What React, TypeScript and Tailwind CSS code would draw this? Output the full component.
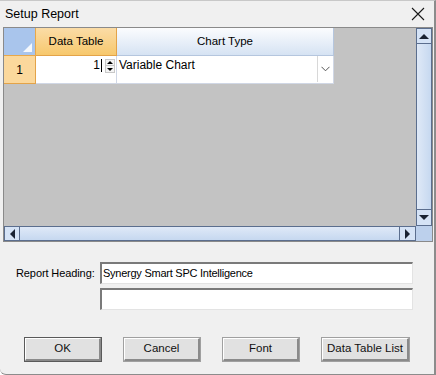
import React from "react";

const font = { fontFamily: '"Liberation Sans", Arial, sans-serif' };

function Btn({ label, w, def }: { label: string; w: string; def?: boolean }) {
  return (
    <div
      className={`${w} h-[25px] ${def ? "border border-[#5a5a5a]" : "border border-[#a0a0a0]"} bg-[#e1e1e1]`}
    >
      <div className="w-full h-full border-t border-l border-t-white border-l-white border-b-2 border-r-2 border-b-[#8a8a8a] border-r-[#8a8a8a] flex items-center justify-center text-[11.5px] text-[#111]">
        {label}
      </div>
    </div>
  );
}

export default function App() {
  return (
    <div
      className="w-[436px] h-[375px] bg-[#f0f0f0] overflow-hidden flex flex-col border-r-2 border-b border-r-[#8c8c8c] border-b-[#8c8c8c] border-t border-t-[#c8c8c8] rounded-bl-[6px]"
      style={font}
    >
      {/* Title bar */}
      <div className="h-[26px] flex items-center justify-between pl-[5px] pr-[8px] shrink-0">
        <span className="text-[12.5px] text-black leading-none">Setup Report</span>
        <svg width="14" height="14" viewBox="0 0 14 14" className="mr-[1px]">
          <path d="M1 1 L13 13 M13 1 L1 13" stroke="#1a1a1a" strokeWidth="1.1" fill="none" />
        </svg>
      </div>

      {/* Grid */}
      <div className="ml-[3px] w-[430px] h-[215px] border border-[#8a8a8a] bg-[#c3c3c3] flex flex-col shrink-0">
        <div className="flex flex-1 min-h-0">
          <div className="flex-1 flex flex-col">
            {/* header row */}
            <div className="flex h-[28px]">
              <div className="w-[32px] h-full bg-[#a9c5ec] border-r border-b border-[#e8a84a] relative">
                <div className="absolute right-[3px] bottom-[3px] w-0 h-0 border-l-[9px] border-l-transparent border-b-[9px] border-b-[#f4f8fd]" />
              </div>
              <div className="w-[81px] h-full bg-gradient-to-b from-[#fbdca6] to-[#f7c86c] border-r border-b border-[#e3a349] flex items-center justify-center text-[11.5px] text-black">
                Data Table
              </div>
              <div className="w-[217px] h-full bg-gradient-to-b from-[#fbfcfe] to-[#d6e3f3] border-r border-b border-[#b5c6de] flex items-center justify-center text-[11.5px] text-black">
                Chart Type
              </div>
            </div>
            {/* row 1 */}
            <div className="flex h-[28px]">
              <div className="w-[32px] h-full bg-[#fbd89c] border-r border-b border-[#e3a349] flex items-center justify-center text-[12px] text-black pt-[1px]">
                1
              </div>
              <div className="w-[81px] h-full bg-white border-r border-b border-[#d0d7e5] flex items-start justify-end pt-[2px] pr-[1px]">
                <span className="text-[12px] text-black leading-[14px]">1</span>
                <div className="w-[1px] h-[13px] bg-black ml-[1px] mt-[1px]" />
                <div className="ml-[3px] w-[10px] flex flex-col mt-[1px]">
                  <div className="h-[7px] border border-[#c8c8c8] bg-[#f4f4f4] flex items-center justify-center">
                    <div className="w-0 h-0 border-l-[3px] border-r-[3px] border-b-[3px] border-l-transparent border-r-transparent border-b-black" />
                  </div>
                  <div className="h-[7px] border border-[#c8c8c8] border-t-0 bg-[#f4f4f4] flex items-center justify-center">
                    <div className="w-0 h-0 border-l-[3px] border-r-[3px] border-t-[3px] border-l-transparent border-r-transparent border-t-black" />
                  </div>
                </div>
              </div>
              <div className="w-[217px] h-full bg-white border-r border-b border-[#d0d7e5] flex items-start justify-between">
                <span className="text-[12px] text-black pl-[2px] pt-[2px] leading-[14px]">Variable Chart</span>
                <div className="w-[16px] h-[26px] border-l border-[#d8d8d8] flex items-center justify-center">
                  <svg width="9" height="6" viewBox="0 0 9 6">
                    <path d="M0.5 0.8 L4.5 4.8 L8.5 0.8" stroke="#555" strokeWidth="1" fill="none" />
                  </svg>
                </div>
              </div>
            </div>
          </div>
          {/* vertical scrollbar */}
          <div className="w-[16px] h-full bg-[#d6e4f6] flex flex-col">
            <div className="h-[16px] border border-[#5b6e8e] bg-[#d5e3f6] flex items-center justify-center">
              <div className="w-0 h-0 border-l-[5px] border-r-[5px] border-b-[5px] border-l-transparent border-r-transparent border-b-[#1a2333]" />
            </div>
            <div className="flex-1 border border-t-0 border-[#5b6e8e] bg-gradient-to-r from-[#dfe9f7] to-[#c6d8f0]" />
            <div className="h-[16px] border border-t-0 border-[#5b6e8e] bg-[#d5e3f6] flex items-center justify-center">
              <div className="w-0 h-0 border-l-[5px] border-r-[5px] border-t-[5px] border-l-transparent border-r-transparent border-t-[#1a2333]" />
            </div>
          </div>
        </div>
        {/* horizontal scrollbar */}
        <div className="h-[15px] flex shrink-0">
          <div className="flex-1 flex bg-[#d6e4f6]">
            <div className="w-[16px] border border-[#5b6e8e] bg-[#d5e3f6] flex items-center justify-center">
              <div className="w-0 h-0 border-t-[5px] border-b-[5px] border-r-[5px] border-t-transparent border-b-transparent border-r-[#1a2333]" />
            </div>
            <div className="flex-1 border border-l-0 border-[#5b6e8e] bg-gradient-to-b from-[#dfe9f7] to-[#c6d8f0]" />
            <div className="w-[16px] border border-l-0 border-[#5b6e8e] bg-[#d5e3f6] flex items-center justify-center">
              <div className="w-0 h-0 border-t-[5px] border-b-[5px] border-l-[5px] border-t-transparent border-b-transparent border-l-[#1a2333]" />
            </div>
          </div>
          <div className="w-[16px] bg-[#bcd0ec]" />
        </div>
      </div>

      {/* Report heading */}
      <div className="flex mt-[20px] pl-[16px]">
        <div className="w-[84px] text-[11px] text-black pt-[3px] tracking-[-0.1px]">Report Heading:</div>
        <div className="flex flex-col gap-[4px]">
          <div className="w-[313px] h-[22px] bg-white border-t-2 border-l-2 border-t-[#7a7a7a] border-l-[#7a7a7a] border-b border-r border-b-[#e3e3e3] border-r-[#e3e3e3] flex items-center pl-[1px] text-[11px] tracking-[-0.25px] text-black">
            Synergy Smart SPC Intelligence
          </div>
          <div className="w-[313px] h-[22px] bg-white border-t-2 border-l-2 border-t-[#7a7a7a] border-l-[#7a7a7a] border-b border-r border-b-[#e3e3e3] border-r-[#e3e3e3]" />
        </div>
      </div>

      {/* buttons */}
      <div className="flex mt-[27px] pl-[24px]">
        <Btn label="OK" w="w-[78px]" def />
        <div className="w-[21px]" />
        <Btn label="Cancel" w="w-[78px]" />
        <div className="w-[21px]" />
        <Btn label="Font" w="w-[78px]" />
        <div className="w-[21px]" />
        <Btn label="Data Table List" w="w-[89px]" />
      </div>
    </div>
  );
}
